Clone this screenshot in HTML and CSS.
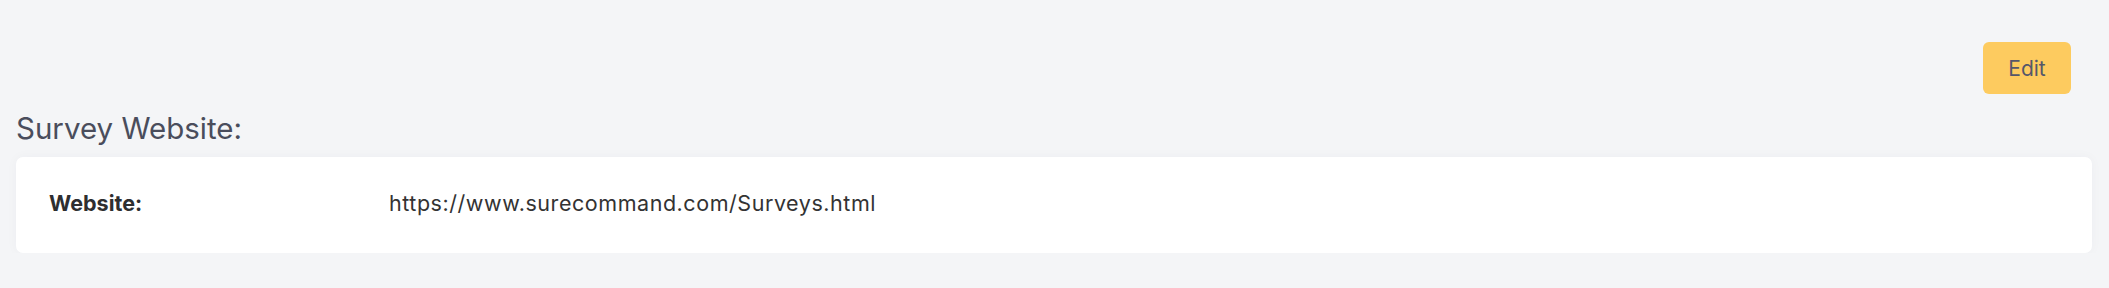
FILE: index.html
```html
<!DOCTYPE html>
<html lang="en">
<head>
  <meta charset="UTF-8">
  <title>Survey Website</title>
  <link rel="stylesheet" href="styles.css">
</head>
<body>
  <div class="container">
    <div class="toolbar">
      <button type="button" class="edit-btn">Edit</button>
    </div>
    <h2 class="section-title">Survey Website:</h2>
    <div class="card">
      <div class="field-row">
        <span class="field-label">Website:</span>
        <span class="field-value">https://www.surecommand.com/Surveys.html</span>
      </div>
    </div>
  </div>
</body>
</html>
```
FILE: styles.css
```css
/* Base */
* { box-sizing: border-box; }
body {
  font-family: "Inter", "Open Sans", sans-serif;
  background: #f4f5f7;
  margin: 0;
}
.container {
  padding: 0 17px 0 16px;
}
.toolbar {
  display: flex;
  justify-content: flex-end;
  padding-top: 42px;
  padding-right: 21px;
}
.edit-btn {
  width: 88px;
  height: 52px;
  background-color: #fdcb5f;
  color: #55576a;
  border: none;
  border-radius: 6px;
  font-family: inherit;
  font-size: 21px;
  cursor: pointer;
}
.edit-btn:hover {
  background-color: #f5bf48;
}
.section-title {
  margin: 16px 0 11px;
  font-size: 29.5px;
  line-height: 36px;
  font-weight: 400;
  color: #4a4d5c;
}
.card {
  background: #fff;
  border-radius: 7px;
  padding: 33px 33px 37px;
  box-shadow: 0 0 12px rgba(40, 50, 90, 0.035);
}
.field-row {
  display: grid;
  grid-template-columns: 340px 1fr;
  line-height: 26px;
  font-size: 21.5px;
}
.field-label {
  font-weight: 700;
  color: #2e2e30;
}
.field-value {
  color: #333;
  letter-spacing: 0.55px;
}
```
